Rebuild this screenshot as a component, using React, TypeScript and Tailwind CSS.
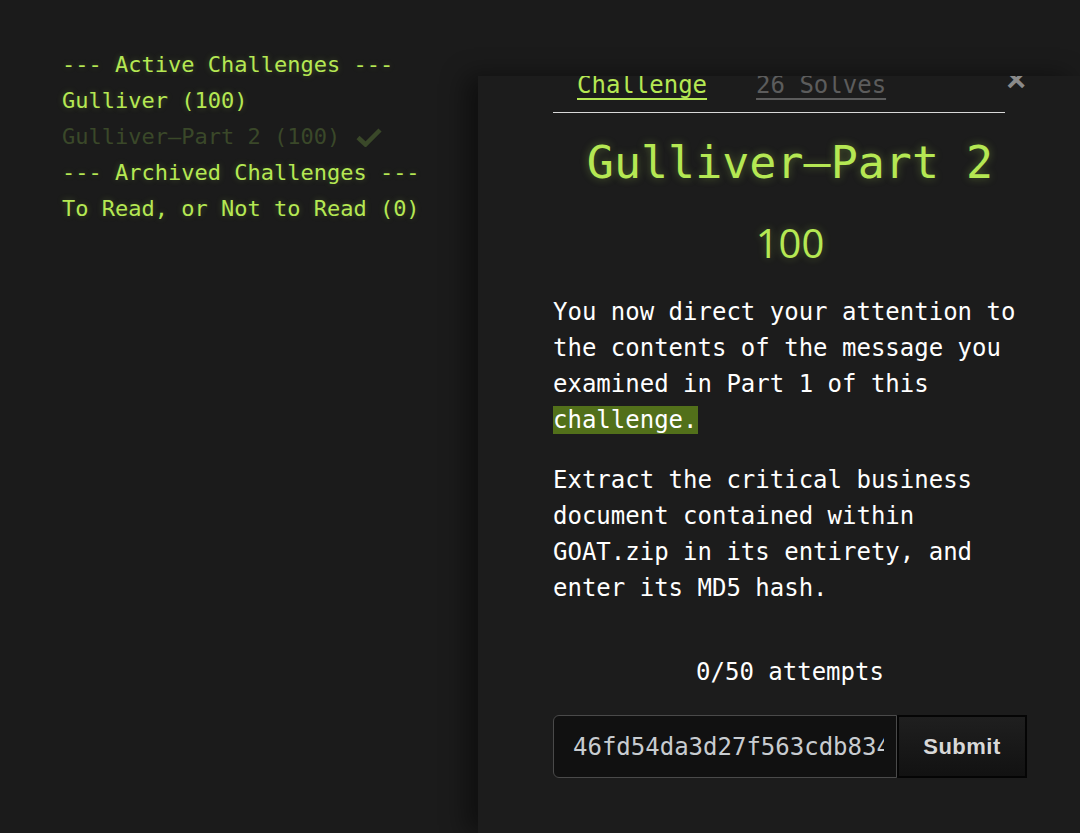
import React from "react";

const mono = "font-['DejaVu_Sans_Mono','Liberation_Mono',monospace]";

function Sidebar() {
  return (
    <nav className={`${mono} pl-[62px] pt-[47px] text-[22px] leading-[36px] text-[#b5e853] [text-shadow:0_0_6px_rgba(181,232,83,0.25)]`}>
      <div>--- Active Challenges ---</div>
      <div>Gulliver (100)</div>
      <div className="flex items-center gap-[20px] text-[#3a4829] [text-shadow:none]">
        <span>Gulliver—Part 2 (100)</span>
        <svg width="26" height="20" viewBox="0 0 26 20" className="-ml-[4px]">
          <path d="M2 10.5 L9.5 17.5 L24 3" fill="none" stroke="#3a4829" strokeWidth="4.5" strokeLinejoin="miter" />
        </svg>
      </div>
      <div>--- Archived Challenges ---</div>
      <div>To Read, or Not to Read (0)</div>
    </nav>
  );
}

function ChallengeModal() {
  return (
    <div className="absolute left-[478px] top-[76px] right-0 bottom-0 overflow-hidden bg-[#1c1c1c] shadow-[-12px_0_24px_rgba(0,0,0,0.45)]">
      <div className="-mt-[9px] ml-[75px] w-[474px]">
        {/* Tabs */}
        <div className="relative w-[452px] border-b border-[#d8d8d8]">
          <div className={`${mono} flex gap-[49px] pl-[24px] pb-[9px] text-[24px] leading-[36px]`}>
            <span className="text-[#b5e853] underline underline-offset-[5px] decoration-2">Challenge</span>
            <span className="text-[#5c5c5c] underline underline-offset-[5px] decoration-2">26 Solves</span>
          </div>
          <span className="absolute -right-[21px] -top-[5px] font-['Liberation_Sans',sans-serif] text-[34px] leading-none font-bold text-[#8a8a8a]">×</span>
        </div>

        {/* Title */}
        <h1 className={`${mono} mt-[23px] text-center text-[45px] leading-[54px] text-[#b5e853] [text-shadow:0_0_8px_rgba(181,232,83,0.35)]`}>
          Gulliver—Part 2
        </h1>
        <div className="mt-[29px] text-center font-['Open_Sans','Noto_Sans',sans-serif] text-[40px] leading-[48px] text-[#b5e853] [text-shadow:0_0_8px_rgba(181,232,83,0.3)]">
          100
        </div>

        {/* Description */}
        <div className={`${mono} mt-[27px] text-[24px] leading-[36px] text-white`}>
          <p>
            You now direct your attention to the contents of the message you examined in Part 1 of this{" "}
            <span className="bg-[#52701a]">challenge.</span>
          </p>
          <p className="mt-[24px] pr-[30px]">
            Extract the critical business document contained within GOAT.zip in its entirety, and enter its MD5 hash.
          </p>
        </div>

        <div className={`${mono} mt-[48px] text-center text-[24px] leading-[36px] text-white`}>
          0/50 attempts
        </div>

        {/* Flag form */}
        <div className="mt-[25px] flex h-[63px]">
          <div className="flex w-[344px] items-center rounded-l-[6px] border border-[#4a4a4a] bg-[#111111] pl-[19px]">
            <div className="w-[311px] overflow-hidden">
              <span className={`${mono} whitespace-nowrap text-[24px] text-[#c8ccd0]`}>46fd54da3d27f563cdb834e3b1a</span>
            </div>
          </div>
          <button className="flex w-[130px] items-center justify-center border-2 border-[#050505] bg-gradient-to-b from-[#1f1f1f] to-[#121212] font-['Liberation_Sans',sans-serif] text-[22px] font-bold tracking-[0.5px] text-[#d8d8d8]">
            Submit
          </button>
        </div>
      </div>
    </div>
  );
}

export default function App() {
  return (
    <div className="relative h-[833px] w-[1080px] overflow-hidden bg-[#1b1b1b]">
      <Sidebar />
      <ChallengeModal />
    </div>
  );
}
